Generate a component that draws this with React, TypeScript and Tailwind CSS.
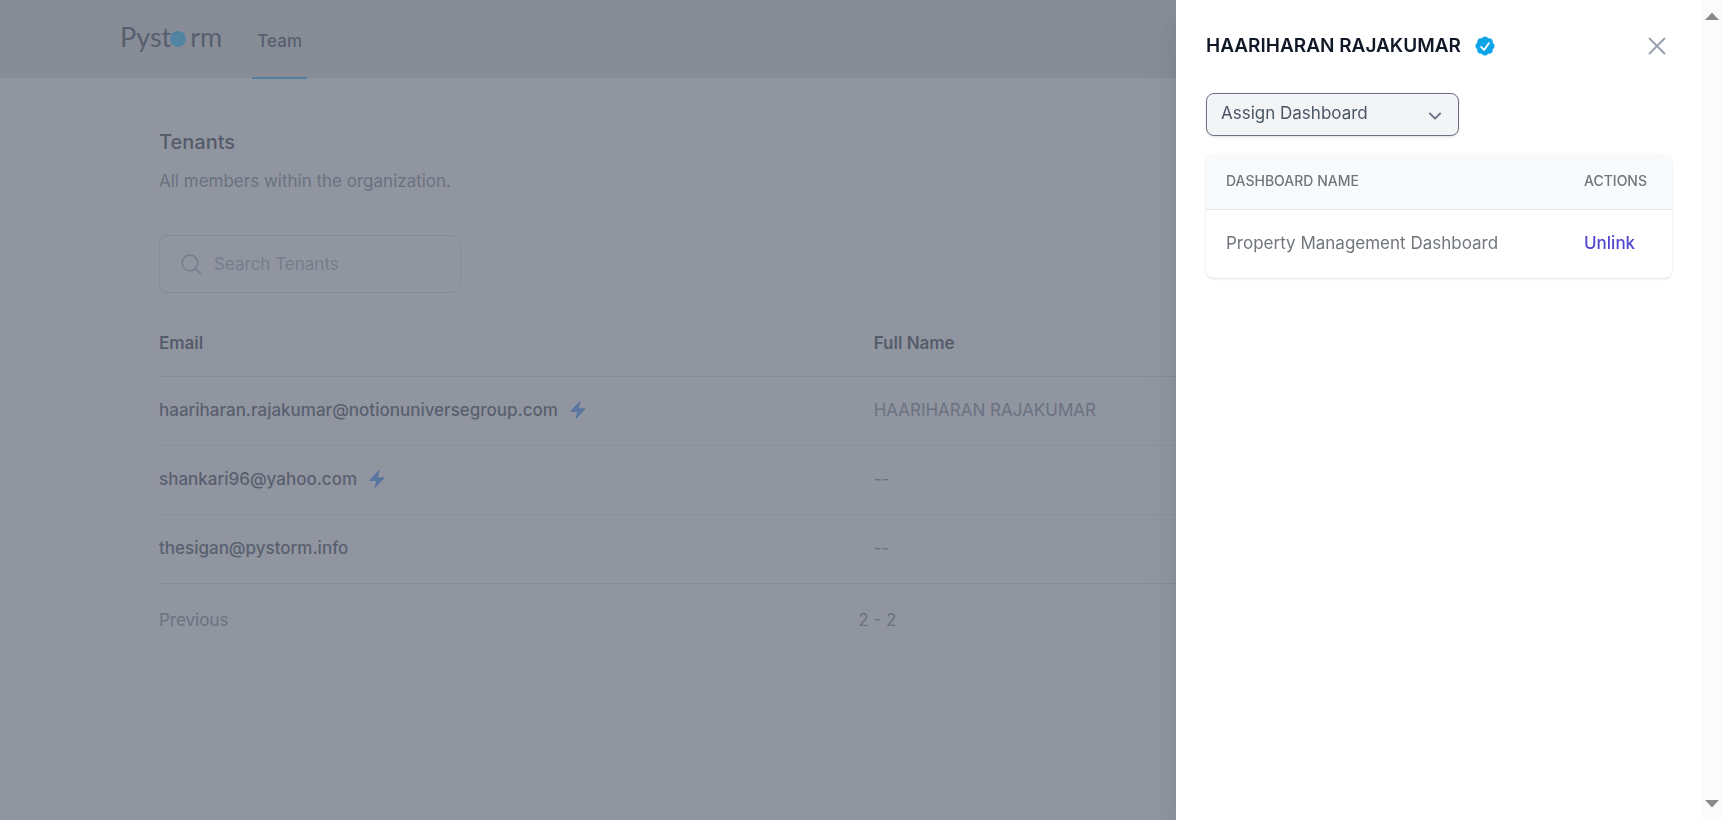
import { useState } from "react";
import {
  HiBolt,
  HiMiniCheckBadge,
  HiMiniChevronDown,
  HiOutlineMagnifyingGlass,
  HiOutlineXMark,
} from "react-icons/hi2";

type Tenant = { email: string; name: string; active: boolean };

const tenants: Tenant[] = [
  { email: "haariharan.rajakumar@notionuniversegroup.com", name: "HAARIHARAN RAJAKUMAR", active: true },
  { email: "shankari96@yahoo.com", name: "--", active: true },
  { email: "thesigan@pystorm.info", name: "--", active: false },
];

function Logo() {
  return (
    <a href="#" className="flex items-baseline font-['Lato',sans-serif] text-[27px] leading-8 text-gray-800">
      <span className="-mr-px">Pyst</span>
      <span className="size-4 rounded-full bg-sky-400" />
      <span className="ml-1">rm</span>
    </a>
  );
}

function Header() {
  return (
    <header className="flex h-[78px] bg-[#d9d9d9] px-[120px]">
      <div className="pt-[21px]">
        <Logo />
      </div>
      <nav className="ml-[30px] flex h-[79px]">
        <a href="#" className="flex items-center border-b-2 border-sky-500 px-[5px] pt-1 font-medium text-gray-800">
          Team
        </a>
      </nav>
    </header>
  );
}

function TenantTable() {
  return (
    <table className="mt-[17px] w-full table-fixed text-left">
      <thead>
        <tr className="h-[66px] border-b border-gray-300 text-gray-900">
          <th className="w-[50.9%] font-semibold">Email</th>
          <th className="font-semibold">Full Name</th>
        </tr>
      </thead>
      <tbody className="divide-y divide-gray-200 border-b border-gray-300">
        {tenants.map((t) => (
          <tr key={t.email} className="h-[69px]">
            <td className="pb-0.5 font-medium text-gray-800">
              <span className="flex items-center gap-2.5">
                {t.email}
                {t.active && <HiBolt className="size-5 text-blue-500" />}
              </span>
            </td>
            <td className="pb-0.5 text-gray-500">{t.name}</td>
          </tr>
        ))}
      </tbody>
    </table>
  );
}

function TenantsPage() {
  return (
    <main className="px-[159px] pt-[50px]">
      <h1 className="text-xl leading-7 font-medium text-gray-900">Tenants</h1>
      <p className="mt-[13px] leading-6 text-gray-500">All members within the organization.</p>
      <label className="mt-[42px] flex h-[58px] w-[302px] items-center gap-2.5 rounded-lg border border-gray-300 px-[19px] text-gray-400">
        <HiOutlineMagnifyingGlass className="size-[25px] shrink-0" />
        <input
          type="search"
          aria-label="Search Tenants"
          placeholder="Search Tenants"
          className="w-full min-w-0 bg-transparent outline-none placeholder:text-gray-400"
        />
      </label>
      <TenantTable />
      <div className="mt-6 flex items-center text-gray-500">
        <div className="w-[49.8%]">
          <button type="button">Previous</button>
        </div>
        <span>2 - 2</span>
      </div>
    </main>
  );
}

function ScrollBar() {
  return (
    <div aria-hidden="true" className="flex w-5 flex-col items-center justify-between bg-[#fbfbfb] py-3">
      <svg width="14" height="8" viewBox="0 0 14 8" fill="#8a8a8a">
        <path d="M7 0.5 14 8H0Z" />
      </svg>
      <svg width="14" height="8" viewBox="0 0 14 8" fill="#8a8a8a">
        <path d="M7 7.5 14 0H0Z" />
      </svg>
    </div>
  );
}

function TenantPanel() {
  const [dashboard, setDashboard] = useState("");
  return (
    <aside
      role="dialog"
      aria-labelledby="panel-title"
      className="fixed inset-y-0 right-0 flex w-[546px] max-w-full bg-white shadow-[0_20px_30px_rgba(0,0,0,0.1)]"
    >
      <div className="min-w-0 flex-1 px-[30px] pt-[31px]">
        <div className="flex items-center justify-between">
          <h2 id="panel-title" className="flex items-center gap-3 text-[19px] leading-7 font-semibold text-gray-900">
            HAARIHARAN RAJAKUMAR
            <HiMiniCheckBadge className="size-6 text-[#0ea5e9]" />
          </h2>
          <button type="button" aria-label="Close" className="text-gray-400">
            <HiOutlineXMark className="size-[30px]" />
          </button>
        </div>
        <div className="mt-8 grid w-[253px] items-center">
          <select
            aria-label="Assign Dashboard"
            value={dashboard}
            onChange={(e) => setDashboard(e.target.value)}
            className="col-start-1 row-start-1 h-[43px] appearance-none rounded-lg border border-gray-500 bg-gray-100 pr-10 pb-1 pl-3.5 text-gray-600 shadow-sm"
          >
            <option value="">Assign Dashboard</option>
          </select>
          <HiMiniChevronDown className="pointer-events-none col-start-1 row-start-1 mr-3 size-6 justify-self-end text-gray-500" />
        </div>
        <div className="mt-[18px] overflow-hidden rounded-lg shadow">
          <table className="w-full text-left text-[#71767d]">
            <thead className="bg-slate-50 text-[14px]">
              <tr className="h-[55px] border-b border-gray-200">
                <th className="pl-5 font-medium">DASHBOARD NAME</th>
                <th className="w-[88px] font-medium">ACTIONS</th>
              </tr>
            </thead>
            <tbody>
              <tr className="h-[69px]">
                <td className="pb-0.5 pl-5">Property Management Dashboard</td>
                <td className="pb-0.5">
                  <button type="button" className="font-medium text-[#5046d0]">
                    Unlink
                  </button>
                </td>
              </tr>
            </tbody>
          </table>
        </div>
      </div>
      <ScrollBar />
    </aside>
  );
}

export default function App() {
  return (
    <div className="min-h-screen bg-white font-['Inter',sans-serif] text-[17px] leading-6">
      <Header />
      <TenantsPage />
      <div className="fixed inset-0 bg-[#6b7280]/75" />
      <TenantPanel />
    </div>
  );
}
